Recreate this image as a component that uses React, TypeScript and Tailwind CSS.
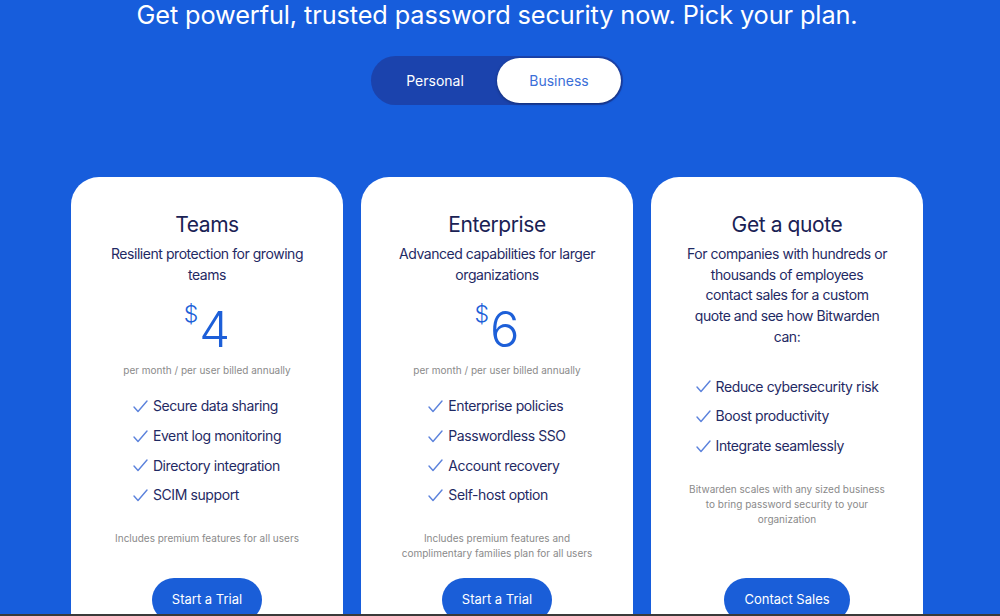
import React from "react";

const Check = () => (
  <svg width="15" height="13" viewBox="0 0 15 13" fill="none" className="shrink-0">
    <polyline points="1,7 5,11.5 14,1" stroke="#5b82dc" strokeWidth="1.4" strokeLinecap="round" strokeLinejoin="round" />
  </svg>
);

type Plan = {
  title: string;
  subtitle: string[];
  price?: string;
  features: string[];
  foot: string[];
  button: string;
};

const plans: Plan[] = [
  {
    title: "Teams",
    subtitle: ["Resilient protection for growing", "teams"],
    price: "4",
    features: ["Secure data sharing", "Event log monitoring", "Directory integration", "SCIM support"],
    foot: ["Includes premium features for all users"],
    button: "Start a Trial",
  },
  {
    title: "Enterprise",
    subtitle: ["Advanced capabilities for larger", "organizations"],
    price: "6",
    features: ["Enterprise policies", "Passwordless SSO", "Account recovery", "Self-host option"],
    foot: ["Includes premium features and", "complimentary families plan for all users"],
    button: "Start a Trial",
  },
  {
    title: "Get a quote",
    subtitle: [
      "For companies with hundreds or",
      "thousands of employees",
      "contact sales for a custom",
      "quote and see how Bitwarden",
      "can:",
    ],
    features: ["Reduce cybersecurity risk", "Boost productivity", "Integrate seamlessly"],
    foot: ["Bitwarden scales with any sized business", "to bring password security to your", "organization"],
    button: "Contact Sales",
  },
];

function Features({ items, gap }: { items: string[]; gap: string }) {
  return (
    <div className={`flex flex-col ${gap}`}>
      {items.map((f) => (
        <div key={f} className="flex items-center gap-[5px] text-[14px] leading-[20px] tracking-[-0.4px] text-[#1f2a64] text-left">
          <Check />
          <span>{f}</span>
        </div>
      ))}
    </div>
  );
}

function Card({ p }: { p: Plan }) {
  return (
    <div className="w-[272px] h-[480px] bg-white rounded-[28px] flex flex-col items-center pt-[34px] pb-[35px] text-center">
      <div className="text-[21px] leading-[28px] tracking-[-0.4px] text-[#1a2255]">{p.title}</div>
      <div className="mt-[5px] text-[14px] leading-[20.7px] tracking-[-0.45px] text-[#1f2a64]">
        {p.subtitle.map((s, i) => (
          <div key={i}>{s}</div>
        ))}
      </div>
      {p.price ? (
        <>
          <div className="mt-[16px] flex items-start justify-center text-[#1d5fd8] h-[58px]">
            <span className="text-[23px] leading-[26px] mr-[1px] font-light">$</span>
            <span className="text-[49px] leading-[58px] font-light">{p.price}</span>
          </div>
          <div className="mt-[4px] text-[10px] leading-[14px] text-[#8a8a8a]">per month / per user billed annually</div>
          <div className="mt-[19px]">
            <Features items={p.features} gap="gap-[9.6px]" />
          </div>
        </>
      ) : (
        <div className="mt-[29px]">
          <Features items={p.features} gap="gap-[9.8px]" />
        </div>
      )}
      <div className="mt-[26px] text-[10px] leading-[15px] text-[#8a8a8a]">
        {p.foot.map((s, i) => (
          <div key={i}>{s}</div>
        ))}
      </div>
      <div className="mt-auto h-[44px] px-[20px] rounded-full bg-[#1a5ed8] text-white text-[13px] flex items-center justify-center">
        {p.button}
      </div>
    </div>
  );
}

export default function App() {
  return (
    <div className="w-[1000px] h-[616px] flex flex-col overflow-hidden" style={{ fontFamily: "Inter, 'Noto Sans', sans-serif" }}>
      <div className="h-[614px] bg-[#175ddc] overflow-hidden">
        <div className="w-[994px] flex flex-col items-center">
          <h1 className="mt-[-1px] text-[25.3px] leading-[32px] text-white tracking-[-0.1px]">
            Get powerful, trusted password security now. Pick your plan.
          </h1>
          <div className="mt-[25px] w-[252px] h-[49px] rounded-full bg-[#1b43ad] p-[2px] flex items-center">
            <div className="flex-1 text-center text-white text-[14px]">Personal</div>
            <div className="w-[124px] h-[45px] rounded-full bg-white shadow-[0_1px_3px_rgba(0,0,0,0.35)] flex items-center justify-center text-[#3b6fd8] text-[14px]">
              Business
            </div>
          </div>
          <div className="mt-[72px] flex gap-[18px] items-start">
            {plans.map((p) => (
              <Card key={p.title} p={p} />
            ))}
          </div>
        </div>
      </div>
      <div className="h-[2px] bg-[#3a3a3a]" />
    </div>
  );
}
